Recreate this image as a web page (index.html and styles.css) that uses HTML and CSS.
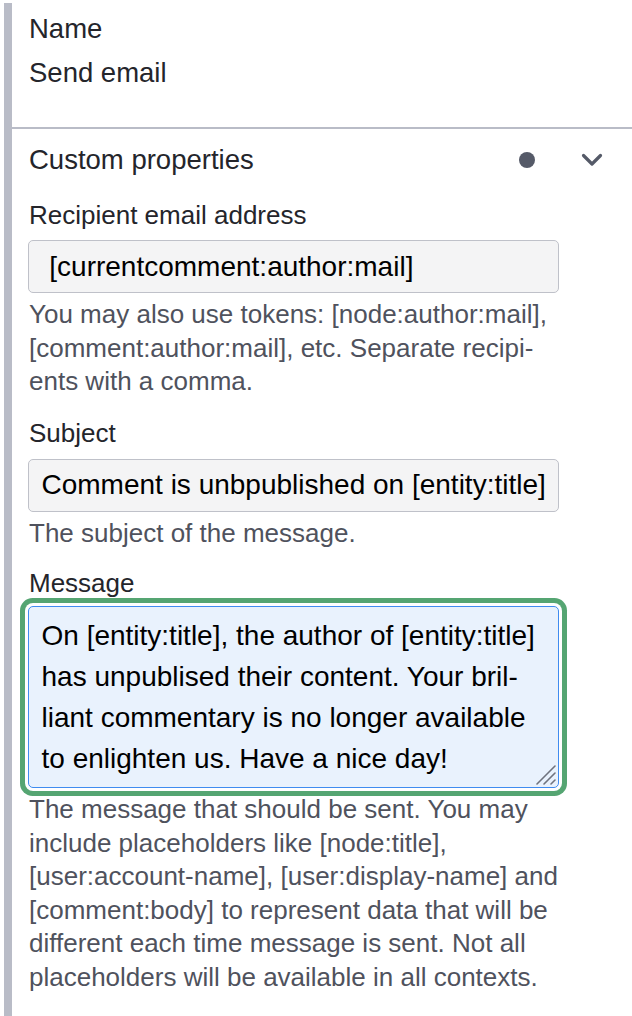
FILE: index.html
```html
<!DOCTYPE html>
<html lang="en">
<head>
<meta charset="utf-8">
<title>Send email</title>
<link rel="stylesheet" href="styles.css">
</head>
<body>
<div class="panel">
  <section class="name-section">
    <div class="title-text">Name</div>
    <div class="title-text value">Send email</div>
  </section>
  <section class="props">
    <div class="props-header">
      <span class="title-text props-title">Custom properties</span>
      <span class="status-dot"></span>
      <svg class="chevron" width="22" height="14" viewBox="0 0 22 14" aria-hidden="true">
        <path d="M2.5 2.5 L11 11 L19.5 2.5" fill="none" stroke="#555a68" stroke-width="3.2" stroke-linecap="round" stroke-linejoin="round"/>
      </svg>
    </div>
    <div class="field field-first">
      <label class="label" for="recipient">Recipient email address</label>
      <input class="control" id="recipient" type="text" value=" [currentcomment:author:mail]">
      <div class="help">You may also use tokens: [node:author:mail], [comment:author:mail], etc. Separate recipi&shy;ents with a comma.</div>
    </div>
    <div class="field">
      <label class="label" for="subject">Subject</label>
      <input class="control" id="subject" type="text" value="Comment is unbpublished on [entity:title]">
      <div class="help">The subject of the message.</div>
    </div>
    <div class="field field-message">
      <label class="label" for="message">Message</label>
      <div class="textarea-wrap">
        <textarea class="control textarea" id="message" rows="4">On [entity:title], the author of [entity:title] has unpublised their content. Your bril&shy;liant commentary is no longer available to enlighten us. Have a nice day!</textarea>
        <svg class="grip" width="22" height="22" viewBox="0 0 22 22" aria-hidden="true">
          <path d="M21 3 L3 21 M21 10 L10 21 M21 17 L17 21" fill="none" stroke="#6f737e" stroke-width="1.6" stroke-linecap="round"/>
        </svg>
      </div>
      <div class="help">The message that should be sent. You may include placeholders like [node:title], [user:account-name], [user:display-name] and [comment:body] to represent data that will be different each time message is sent. Not all placeholders will be available in all contexts.</div>
    </div>
  </section>
</div>
</body>
</html>
```

FILE: styles.css
```css
* {
  box-sizing: border-box;
}

html, body {
  margin: 0;
  padding: 0;
  background: #ffffff;
}

body {
  font-family: "Liberation Sans", Arial, Helvetica, sans-serif;
  font-size: 26px;
  line-height: 32px;
  color: #24252b;
}

.panel {
  margin: 3px 0 0 4px;
  border-left: 8px solid #b9bcc7;
  min-height: 1013px;
}

.name-section {
  padding: 10px 0 38px 17px;
  border-bottom: 2px solid #b9bcc7;
}

.title-text {
  font-size: 27.5px;
  line-height: 32px;
  color: #24252b;
}

.value {
  margin-top: 12px;
}

.props {
  padding: 15px 0 0 16px;
}

.props-header {
  display: flex;
  align-items: center;
  height: 32px;
  padding-left: 1px;
}

.props-title {
  flex: 1;
}

.status-dot {
  width: 16px;
  height: 16px;
  border-radius: 50%;
  background: #555a68;
  margin-right: 46px;
}

.chevron {
  display: block;
  margin-right: 29px;
}

.field {
  display: flex;
  flex-direction: column;
  align-items: flex-start;
  margin-top: 18px;
}

.field-first {
  margin-top: 23px;
}

.label {
  display: block;
  padding-left: 1px;
  margin-bottom: 10px;
  font-size: 26px;
  line-height: 32px;
  color: #24252b;
}

.field-first .label {
  margin-bottom: 9px;
}

.field-message {
  margin-top: 17px;
}

.field-message .label {
  margin-bottom: 7px;
}

.control {
  width: 531px;
  height: 53px;
  margin: 0;
  padding: 0 6px 0 12.5px;
  border: 1.5px solid #bfc1c9;
  border-radius: 5px;
  background: #f4f4f5;
  font-family: "Liberation Sans", Arial, Helvetica, sans-serif;
  font-size: 28px;
  color: #000000;
  outline: none;
}

.textarea-wrap {
  position: relative;
  display: block;
}

.textarea {
  display: block;
  height: 182px;
  padding: 8px 12px 7px 12.5px;
  line-height: 41px;
  border: 1.5px solid #3f8cf0;
  background: #e9f2fd;
  resize: none;
  overflow: hidden;
  box-shadow: 0 0 0 3px #ffffff, 0 0 0 8px #55a572;
}

.grip {
  position: absolute;
  right: 3px;
  bottom: 3px;
}

.help {
  width: 536px;
  margin-top: 5px;
  padding-left: 1px;
  font-size: 26px;
  line-height: 33.5px;
  color: #4f525d;
}
```
